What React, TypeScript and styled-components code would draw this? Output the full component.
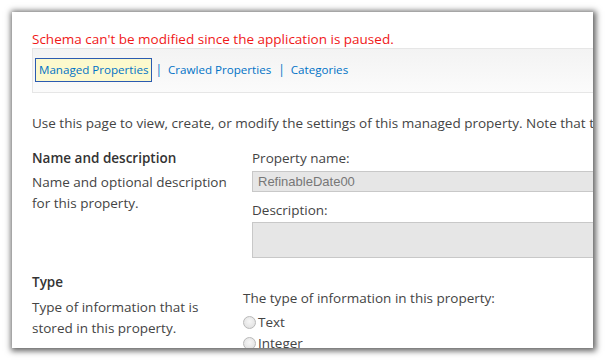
import React from "react";
import styled, { createGlobalStyle } from "styled-components";

const Global = createGlobalStyle`
  html, body { margin: 0; padding: 0; background: #ffffff; }
  body { font-family: "Open Sans", "Noto Sans", sans-serif; }
`;

const Stage = styled.div`
  width: 606px;
  height: 360px;
  padding: 12px 13px 12px 12px;
  box-sizing: border-box;
`;

const Panel = styled.div`
  width: 581px;
  height: 336px;
  background: #ffffff;
  box-shadow: 1px 1px 6px 2px rgba(0, 0, 0, 0.62);
  overflow: hidden;
  padding: 19px 0 0 20px;
  box-sizing: border-box;
  color: #444444;
  font-size: 13.5px;
`;

const ErrorText = styled.div`
  color: #f01818;
  line-height: 16px;
  white-space: nowrap;
`;

const NavBar = styled.div`
  margin-top: 1px;
  width: 600px;
  height: 45px;
  box-sizing: border-box;
  background: linear-gradient(#f3f3f3, #fbfbfb);
  border: 1px solid #e6e6e6;
  padding: 9px 0 0 2px;
  display: flex;
  align-items: flex-start;
`;

const NavLink = styled.a<{ $active?: boolean }>`
  color: #0072c6;
  font-size: 11.6px;
  text-decoration: none;
  height: 24px;
  line-height: 22px;
  box-sizing: border-box;
  padding: 0 3px;
  background: ${(p) => (p.$active ? "#fcf9cd" : "transparent")};
  border: 1px solid ${(p) => (p.$active ? "#2b5bb0" : "transparent")};
  white-space: nowrap;
`;

const Sep = styled.span`
  color: #0072c6;
  font-size: 12px;
  line-height: 24px;
  padding: 0 2px 0 3px;
`;

const Intro = styled.div`
  margin-top: 21px;
  white-space: nowrap;
  line-height: 18px;
`;

const Section = styled.div<{ $top: number }>`
  display: grid;
  grid-template-columns: 211px 1fr;
  margin-top: ${(p) => p.$top}px;
`;

const Side = styled.div`
  display: flex;
  flex-direction: column;
`;

const SideTitle = styled.div<{ $gap: number }>`
  font-weight: 600;
  color: #333333;
  line-height: 18px;
  margin-bottom: ${(p) => p.$gap}px;
`;

const SideText = styled.div`
  line-height: 21px;
  width: 200px;
`;

const Fields = styled.div<{ $indent: number; $top: number }>`
  display: flex;
  flex-direction: column;
  padding-left: ${(p) => p.$indent}px;
  padding-top: ${(p) => p.$top}px;
`;

const Label = styled.div<{ $gap: number; $top?: number }>`
  line-height: 18px;
  margin-top: ${(p) => p.$top ?? 0}px;
  margin-bottom: ${(p) => p.$gap}px;
  white-space: nowrap;
`;

const TextBox = styled.div<{ $h: number }>`
  width: 400px;
  height: ${(p) => p.$h}px;
  box-sizing: border-box;
  background: #e6e6e6;
  border: 1px solid #c8c8c8;
  font-family: "Liberation Sans", Arial, sans-serif;
  font-size: 13px;
  color: #777777;
  padding: 0 5px;
  line-height: 19px;
`;

const RadioRow = styled.label`
  display: flex;
  align-items: center;
  height: 21px;
  line-height: 21px;
`;

const Radio = styled.span`
  width: 13px;
  height: 13px;
  border-radius: 50%;
  box-sizing: border-box;
  border: 1px solid #b9b9b9;
  background: radial-gradient(circle at 50% 40%, #f6f6f6, #dcdcdc);
  margin-right: 2px;
`;

export default function App() {
  return (
    <>
      <Global />
      <Stage>
        <Panel>
          <ErrorText>Schema can't be modified since the application is paused.</ErrorText>
          <NavBar>
            <NavLink $active>Managed Properties</NavLink>
            <Sep>|</Sep>
            <NavLink>Crawled Properties</NavLink>
            <Sep>|</Sep>
            <NavLink>Categories</NavLink>
          </NavBar>
          <Intro>
            Use this page to view, create, or modify the settings of this managed property. Note that the
          </Intro>
          <Section $top={17}>
            <Side>
              <SideTitle $gap={5}>Name and description</SideTitle>
              <SideText>Name and optional description for this property.</SideText>
            </Side>
            <Fields $indent={9} $top={0}>
              <Label $gap={4}>Property name:</Label>
              <TextBox $h={21}>RefinableDate00</TextBox>
              <Label $gap={3} $top={9}>Description:</Label>
              <TextBox $h={36} />
            </Fields>
          </Section>
          <Section $top={15}>
            <Side>
              <SideTitle $gap={6}>Type</SideTitle>
              <SideText>Type of information that is stored in this property.</SideText>
            </Side>
            <Fields $indent={0} $top={16}>
              <Label $gap={5}>The type of information in this property:</Label>
              <RadioRow>
                <Radio />
                Text
              </RadioRow>
              <RadioRow>
                <Radio />
                Integer
              </RadioRow>
            </Fields>
          </Section>
        </Panel>
      </Stage>
    </>
  );
}
